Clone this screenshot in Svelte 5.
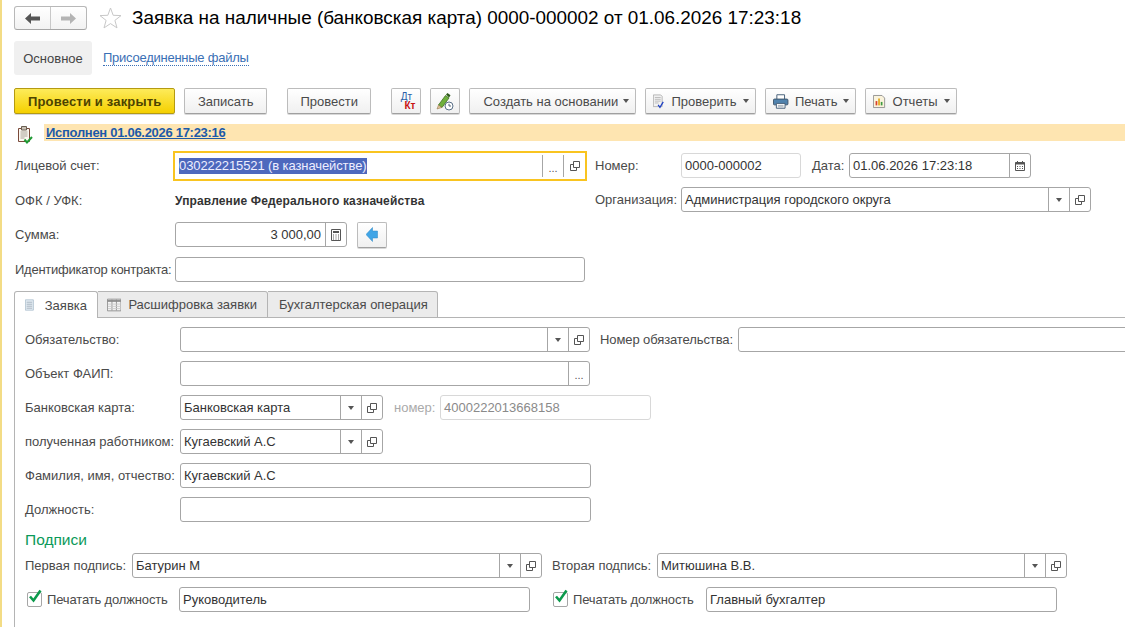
<script>
  const toolbarMenus = ['check', 'print', 'reports'];
  const menuTitles = { check: 'Проверить', print: 'Печать', reports: 'Отчеты' };
</script>

{#snippet copyBtn()}
  <span class="fbtn">
    <svg width="10" height="10" viewBox="0 0 10 10"><path d="M3.500 3.500H.5v6h6V7" fill="none" stroke="#555"/><path d="M3.500.5h6v6h-6z" fill="#fff" stroke="#555"/></svg>
  </span>
{/snippet}

{#snippet dropBtn()}
  <span class="fbtn"><i class="tri"></i></span>
{/snippet}

{#snippet dotsBtn()}
  <span class="fbtn dots">...</span>
{/snippet}

{#snippet caret()}
  <i class="tri caret"></i>
{/snippet}

{#snippet checkMark()}
  <span class="box"><svg width="16" height="16" viewBox="0 0 16 16"><path d="M3 7.500l3.500 4L13.500 1.500" fill="none" stroke="#0c9a4c" stroke-width="2.600"/></svg></span>
{/snippet}

<div class="page">
  <header class="head">
    <div class="nav">
      <span class="navbtn">
        <svg width="15" height="11" viewBox="0 0 15 11"><path d="M0 5.500 6 0v3.500h9v4H6V11z" fill="#555"/></svg>
      </span>
      <span class="navbtn">
        <svg width="15" height="11" viewBox="0 0 15 11"><path d="M15 5.500 9 0v3.500H0v4h9V11z" fill="#b4b4b4"/></svg>
      </span>
    </div>
    <svg class="star" width="23" height="22" viewBox="0 0 23 22"><path d="M11.500 1l2.700 7.300 7.800.3-6.100 4.800 2.100 7.500-6.500-4.300-6.500 4.300 2.100-7.500L1 8.600l7.800-.3z" fill="#fff" stroke="#c8c8c8"/></svg>
    <h1>Заявка на наличные (банковская карта) 0000-000002 от 01.06.2026 17:23:18</h1>
  </header>

  <nav class="subnav">
    <span class="sub-active">Основное</span>
    <span class="sub-link">Присоединенные файлы</span>
  </nav>

  <div class="toolbar">
    <button class="btn primary">Провести и закрыть</button>
    <button class="btn">Записать</button>
    <button class="btn sep">Провести</button>
    <button class="btn icon sep">
      <span class="dtkt"><span class="dt">Дт</span><span class="kt">Кт</span></span>
    </button>
    <button class="btn icon">
      <svg width="18" height="19" viewBox="0 0 18 19">
        <path d="M2.500 13 9.500 3.500l3.500 2.500L6 15.500z" fill="#6fb03c" stroke="#3f6f22" stroke-width=".8"/>
        <path d="M10 2.500 11.500 1l3 2.200-1.400 2.200z" fill="#2f5a1c"/>
        <path d="M2.500 13 1 17l4.800-1.500z" fill="#e2c49a" stroke="#8a6a3a" stroke-width=".5"/>
        <circle cx="13" cy="14" r="4" fill="#fff" stroke="#5a7088"/>
        <path d="M13 11.800V14h2" fill="none" stroke="#3f5266" stroke-width=".9"/>
      </svg>
    </button>
    <button class="btn menu m-create">Создать на основании{@render caret()}</button>
    {#each toolbarMenus as m}
      <button class="btn menu with-ico m-{m}">
        {#if m === 'check'}
          <svg width="15" height="19" viewBox="0 0 15 19">
            <path d="M.5.500h10l2 2v14H.5z" fill="#f2f2f2" stroke="#a0a0a0"/>
            <path d="M2.500 4h8M2.500 6.500h8M2.500 9h8M2.500 11.500h5" stroke="#a8a8a8"/>
            <path d="M7 14l2.500 3.500L14 10" fill="none" stroke="#1c3fc4" stroke-width="1.700"/>
          </svg>
        {:else if m === 'print'}
          <svg width="16" height="15" viewBox="0 0 16 15">
            <path d="M4 .500h8v5H4z" fill="#fff" stroke="#46607a"/>
            <rect x=".5" y="5" width="15" height="6" rx="1" fill="#4f82ad" stroke="#3f566c"/>
            <path d="M3.500 9.500h9v5h-9z" fill="#fff" stroke="#46607a"/>
            <path d="M5 11.500h6M5 13h6" stroke="#7a8a98" stroke-width=".7"/>
          </svg>
        {:else}
          <svg width="14" height="15" viewBox="0 0 14 15">
            <path d="M.5.500h10l3 3v11H.5z" fill="#faf3dc" stroke="#8a8a8a"/>
            <rect x="3" y="7" width="2" height="5" fill="#d9412b"/>
            <rect x="6" y="4" width="2" height="8" fill="#e2a91f"/>
            <rect x="9" y="8" width="2" height="4" fill="#3d9a3f"/>
          </svg>
        {/if}
        {menuTitles[m]}{@render caret()}
      </button>
    {/each}
  </div>

  <div class="status">
    <svg class="status-ico" width="16" height="18" viewBox="0 0 16 18">
      <path d="M1.500 2.500h11v13h-11z" fill="#fbf8f2" stroke="#7a4a3a"/>
      <path d="M4.500.500h5v3.500h-5z" fill="#c9c2b6" stroke="#6a5f52"/>
      <path d="M3.500 6h7M3.500 8h7M3.500 10h7M3.500 12h4" stroke="#a8a298"/>
      <path d="M7.500 13.500l2.500 3 5-5.500" fill="none" stroke="#1f9a34" stroke-width="2"/>
    </svg>
    <div class="status-bar"><a href="#status">Исполнен 01.06.2026 17:23:16</a></div>
  </div>

  <div class="top-form">
    <div class="top-left">
      <div class="row lic-row">
        <span class="label l-top">Лицевой счет:</span>
        <div class="field focus w-lic">
          <span class="val"><span class="selected">030222215521 (в казначействе)</span></span>
          {@render dotsBtn()}
          {@render copyBtn()}
        </div>
      </div>
      <div class="row ofk">
        <span class="label l-top2">ОФК / УФК:</span>
        <b class="ofk-val">Управление Федерального казначейства</b>
      </div>
      <div class="row sum">
        <span class="label l-top2">Сумма:</span>
        <div class="field w-sum">
          <span class="val right">3 000,00</span>
          <span class="fbtn">
            <svg width="10" height="12" viewBox="0 0 10 12"><path d="M.5.500h9v11h-9z" fill="#fff" stroke="#555"/><path d="M2 2h6v2H2z" fill="#555"/><path d="M2 6h1M4.500 6h1M7 6h1M2 8h1M4.500 8h1M7 8h1M2 10h1M4.500 10h1M7 10h1" stroke="#555"/></svg>
          </span>
        </div>
        <button class="btn icon arrow">
          <svg width="12" height="15" viewBox="0 0 12 15"><path d="M0 7.500 6.500.5V4h5v7h-5v3.500z" fill="#41a5e6" stroke="#2a86c4" stroke-width=".5"/></svg>
        </button>
      </div>
      <div class="row contract">
        <span class="label l-top2 narrow">Идентификатор контракта:</span>
        <div class="field w-contract"><span class="val"></span></div>
      </div>
    </div>

    <div class="top-right">
      <div class="row">
        <span class="label l-org">Номер:</span>
        <div class="field light w-num"><span class="val">0000-000002</span></div>
        <span class="label l-date">Дата:</span>
        <div class="field w-date">
          <span class="val">01.06.2026 17:23:18</span>
          <span class="fbtn">
            <svg width="10" height="10" viewBox="0 0 10 10"><path d="M.5 1.500h9v8h-9z" fill="#fff" stroke="#555"/><path d="M.5 1.500h9v2h-9z" fill="#555"/><path d="M2.500 0v2M7.500 0v2" stroke="#555"/><path d="M2 5.500h1M4.500 5.500h1M7 5.500h1M2 7.500h1M4.500 7.500h1M7 7.500h1" stroke="#555"/></svg>
          </span>
        </div>
      </div>
      <div class="row">
        <span class="label l-org">Организация:</span>
        <div class="field w-org">
          <span class="val">Администрация городского округа</span>
          {@render dropBtn()}
          {@render copyBtn()}
        </div>
      </div>
    </div>
  </div>

  <div class="tabs">
    <span class="tab active">
      <svg width="11" height="14" viewBox="0 0 11 14"><path d="M.5.500h10v13H.5z" fill="#e6eef5" stroke="#a9bccb"/><path d="M2 3.500h7M2 6h7M2 8.500h7M2 11h7" stroke="#9aa8b4"/></svg>
      Заявка
    </span>
    <span class="tab t2">
      <svg width="16" height="14" viewBox="0 0 16 14"><path d="M.5.500h15v13H.5z" fill="#f4f4f4" stroke="#8c8c8c"/><path d="M.5 2.500h15" stroke="#8c8c8c" stroke-width="2"/><path d="M5.500 1v12M10.500 1v12" stroke="#8c8c8c"/><path d="M1 6h14M1 8.500h14M1 11h14" stroke="#c9c9c9"/></svg>
      Расшифровка заявки
    </span>
    <span class="tab t3">Бухгалтерская операция</span>
    <span class="tab-rest"></span>
  </div>

  <section class="panel">
    <div class="row">
      <span class="label l-tab">Обязательство:</span>
      <div class="field w-obl">
        <span class="val"></span>
        {@render dropBtn()}
        {@render copyBtn()}
      </div>
      <span class="label l-obl-num">Номер обязательства:</span>
      <div class="field w-obl-num"><span class="val"></span></div>
    </div>
    <div class="row">
      <span class="label l-tab">Объект ФАИП:</span>
      <div class="field w-obl">
        <span class="val"></span>
        {@render dotsBtn()}
      </div>
    </div>
    <div class="row">
      <span class="label l-tab">Банковская карта:</span>
      <div class="field w-card">
        <span class="val">Банковская карта</span>
        {@render dropBtn()}
        {@render copyBtn()}
      </div>
      <span class="label muted l-cardnum">номер:</span>
      <div class="field light w-cardnum"><span class="val gray">4000222013668158</span></div>
    </div>
    <div class="row">
      <span class="label l-tab">полученная работником:</span>
      <div class="field w-card">
        <span class="val">Кугаевский А.С</span>
        {@render dropBtn()}
        {@render copyBtn()}
      </div>
    </div>
    <div class="row">
      <span class="label l-tab">Фамилия, имя, отчество:</span>
      <div class="field w-fio"><span class="val">Кугаевский А.С</span></div>
    </div>
    <div class="row">
      <span class="label l-tab">Должность:</span>
      <div class="field w-fio"><span class="val"></span></div>
    </div>

    <h2>Подписи</h2>
    <div class="row sign">
      <span class="label l-sign1">Первая подпись:</span>
      <div class="field w-sign">
        <span class="val">Батурин М</span>
        {@render dropBtn()}
        {@render copyBtn()}
      </div>
      <span class="label l-sign2">Вторая подпись:</span>
      <div class="field w-sign">
        <span class="val">Митюшина В.В.</span>
        {@render dropBtn()}
        {@render copyBtn()}
      </div>
    </div>
    <div class="row">
      <label class="check c1">
        {@render checkMark()}
        Печатать должность
      </label>
      <div class="field w-pos1"><span class="val">Руководитель</span></div>
      <label class="check c2">
        {@render checkMark()}
        Печатать должность
      </label>
      <div class="field w-pos1"><span class="val">Главный бухгалтер</span></div>
    </div>
  </section>
</div>

<style>
  :global(body) {
    margin: 0;
    background: #fff;
  }

  .page {
    box-sizing: border-box;
    width: 1125px;
    height: 627px;
    overflow: hidden;
    display: flex;
    flex-direction: column;
    padding-left: 12px;
    border-left: 2px solid #f3dc85;
    font: 13px "Liberation Sans", Arial, sans-serif;
    color: #4a4a4a;
  }

  /* header */
  .head {
    display: flex;
    align-items: center;
    height: 24px;
    margin-top: 6px;
  }

  .nav {
    box-sizing: border-box;
    display: flex;
    width: 73px;
    height: 24px;
    border: 1px solid #b8b8b8;
    border-bottom-color: #a5a5a5;
    border-radius: 3px;
    background: linear-gradient(#fff, #f2f2f2);
  }

  .navbtn {
    flex: 1;
    display: flex;
    align-items: center;
    justify-content: center;
  }

  .navbtn + .navbtn {
    border-left: 1px solid #c8c8c8;
  }

  .star {
    margin-left: 12px;
  }

  h1 {
    margin: 0 0 0 10px;
    font-size: 18.9px;
    font-weight: 400;
    color: #000;
    white-space: nowrap;
  }

  .subnav {
    display: flex;
    align-items: center;
    height: 34px;
    margin-top: 11px;
  }

  .sub-active {
    display: flex;
    align-items: center;
    justify-content: center;
    width: 78px;
    height: 34px;
    border-radius: 3px;
    background: #f0f0f0;
    color: #444;
  }

  .sub-link {
    margin-left: 11px;
    margin-top: 1px;
    color: #3a6fb5;
    border-bottom: 1px dotted #3a6fb5;
    line-height: 14px;
    letter-spacing: -.25px;
  }

  /* toolbar */
  .toolbar {
    display: flex;
    gap: 9px;
    height: 26px;
    margin-top: 13px;
  }

  .btn {
    box-sizing: border-box;
    display: flex;
    align-items: center;
    height: 26px;
    padding: 0 12.5px;
    border: 1px solid #bcbcbc;
    border-bottom-color: #a0a0a0;
    border-radius: 2px;
    background: linear-gradient(#fff, #f0f0f0);
    box-shadow: 0 1px 0 #d8d8d8;
    font: inherit;
    color: #4a4a4a;
    white-space: nowrap;
  }

  .btn.primary {
    padding: 0 13px;
    border-color: #b49a12;
    background: linear-gradient(#fdeb5a, #f5d000);
    font-weight: 700;
    letter-spacing: .17px;
    color: #4d4300;
  }

  .btn.sep {
    margin-left: 11px;
  }

  .btn.icon {
    justify-content: center;
    width: 30px;
    padding: 0;
  }

  .btn.menu {
    padding: 0 6px 0 13px;
  }

  .btn.with-ico {
    padding-left: 7px;
  }

  .m-create { width: 167px; }
  .m-check { width: 111px; gap: 7px; }
  .m-print { width: 91px; gap: 6px; }
  .m-reports { width: 92px; gap: 7px; }

  .tri {
    display: block;
    width: 0;
    height: 0;
    border: 3px solid transparent;
    border-top: 4px solid #555;
    border-bottom: 0;
  }

  .caret {
    margin-left: auto;
  }

  .dtkt {
    display: flex;
    flex-direction: column;
    width: 18px;
    font-size: 10px;
    line-height: 9px;
  }

  .dt {
    color: #2a5fa8;
  }

  .kt {
    align-self: flex-end;
    color: #c81414;
    font-weight: 700;
  }

  /* status line */
  .status {
    position: relative;
    display: flex;
    height: 17px;
    margin-top: 10px;
  }

  .status-ico {
    position: absolute;
    left: 3px;
    top: 2px;
  }

  .status-bar {
    flex: 1;
    margin-left: 30px;
    padding-left: 2px;
    background: #fee5b1;
    line-height: 17px;
  }

  .status-bar a {
    color: #1c5aa8;
    font-weight: 700;
    letter-spacing: -.29px;
  }

  /* form */
  .top-form {
    display: flex;
    margin-top: 10px;
  }

  .top-left {
    width: 573px;
  }

  .top-right {
    margin-left: 8px;
    padding-top: 2px;
    display: flex;
    flex-direction: column;
    gap: 9px;
  }

  .row {
    display: flex;
    align-items: center;
    height: 25px;
  }

  .lic-row {
    height: 30px;
  }

  .ofk {
    margin-top: 7px;
  }

  .sum {
    margin-top: 9px;
  }

  .contract {
    margin-top: 10px;
  }

  .label {
    flex: none;
    padding-left: 1px;
    box-sizing: border-box;
    white-space: nowrap;
  }

  .narrow {
    letter-spacing: -.25px;
  }

  .l-top {
    width: 159px;
    padding-bottom: 2px;
  }

  .l-top2 {
    width: 161px;
  }

  .l-org {
    width: 86px;
    padding-left: 0;
  }

  .l-date {
    width: 37px;
    margin-left: 11px;
    padding-left: 0;
  }

  .l-tab {
    width: 155px;
    padding-left: 0;
  }

  .l-obl-num {
    width: 138px;
    margin-left: 10px;
    padding-left: 0;
    letter-spacing: -.1px;
  }

  .l-cardnum {
    width: 46px;
    margin-left: 11px;
    padding-left: 0;
  }

  .l-sign1 {
    width: 107px;
    padding-left: 0;
  }

  .l-sign2 {
    width: 105px;
    margin-left: 10px;
    padding-left: 0;
  }

  .muted {
    color: #aaa;
  }

  .ofk-val {
    color: #333;
    font-size: 12px;
    letter-spacing: .14px;
  }

  .field {
    box-sizing: border-box;
    flex: none;
    display: flex;
    align-items: stretch;
    height: 25px;
    border: 1px solid #a6a6a6;
    border-radius: 3px;
    background: #fff;
    color: #333;
  }

  .field.light {
    border-color: #d8d8d8;
  }

  .field.focus {
    height: 30px;
    border: 2px solid #f9c420;
    border-radius: 0;
  }

  .val {
    flex: 1;
    display: flex;
    align-items: center;
    justify-content: flex-start;
    padding: 0 3px;
    min-width: 0;
    white-space: nowrap;
  }

  .focus .val {
    padding: 0 4px;
  }

  .val.right {
    justify-content: flex-end;
    padding-right: 4px;
  }

  .val.gray {
    color: #8a8a8a;
  }

  .selected {
    background: #4d68bd;
    color: #eef;
    line-height: 16px;
    letter-spacing: -.1px;
  }

  .fbtn {
    flex: none;
    width: 20px;
    display: flex;
    align-items: center;
    justify-content: center;
    border-left: 1px solid #a6a6a6;
  }

  .focus .fbtn {
    margin: 2px 0;
  }

  .focus .fbtn:last-child {
    width: 21px;
  }

  .dots {
    color: #555;
    font-size: 11px;
    line-height: 16px;
    padding-top: 3px;
    box-sizing: border-box;
    width: 21px;
  }

  .w-lic { width: 414px; }
  .w-sum { width: 172px; }
  .w-contract { width: 410px; }
  .w-num { width: 120px; }
  .w-date { width: 182px; }
  .w-org { width: 410px; }
  .w-obl { width: 410px; }
  .w-obl-num { width: 400px; }
  .w-card { width: 203px; }
  .w-cardnum { width: 211px; }
  .w-fio { width: 411px; }
  .w-sign { width: 410px; }
  .w-pos1 { width: 351px; }

  .btn.arrow {
    width: 30px;
    margin-left: 10px;
  }

  /* tabs */
  .tabs {
    display: flex;
    height: 27px;
    margin-top: 9px;
  }

  .tab {
    box-sizing: border-box;
    display: flex;
    align-items: center;
    padding: 0 10px;
    border: 1px solid #b4b4b4;
    border-left: 0;
    border-radius: 0 3px 0 0;
    background: #ebebeb;
    white-space: nowrap;
  }

  .tab.active {
    width: 84px;
    gap: 11px;
    padding-left: 10px;
    border-left: 1px solid #b4b4b4;
    border-bottom: 0;
    border-radius: 3px 3px 0 0;
    background: #fff;
  }

  .t2 {
    width: 170px;
    gap: 7px;
    padding-left: 9px;
  }

  .t3 {
    width: 170px;
    padding-left: 11px;
  }

  .tab-rest {
    flex: 1;
    border-bottom: 1px solid #b4b4b4;
  }

  .panel {
    flex: 1;
    display: flex;
    flex-direction: column;
    gap: 9px;
    padding: 9px 0 0 10px;
    border-left: 1px solid #b4b4b4;
  }

  h2 {
    margin: 0;
    height: 22px;
    line-height: 18px;
    font-size: 15.5px;
    font-weight: 400;
    color: #0b9a5a;
  }

  .sign {
    margin-top: -9px;
  }

  .check {
    box-sizing: border-box;
    display: flex;
    align-items: center;
    gap: 5px;
    white-space: nowrap;
    letter-spacing: -.15px;
  }

  .c1 {
    width: 152px;
    margin-left: 2px;
  }

  .c2 {
    width: 153px;
    margin-left: 23px;
  }

  .box {
    position: relative;
    box-sizing: border-box;
    width: 15px;
    height: 15px;
    border: 1px solid #a6a6a6;
    border-radius: 2px;
  }

  .box svg {
    position: absolute;
    left: -1px;
    top: -4px;
  }
</style>
